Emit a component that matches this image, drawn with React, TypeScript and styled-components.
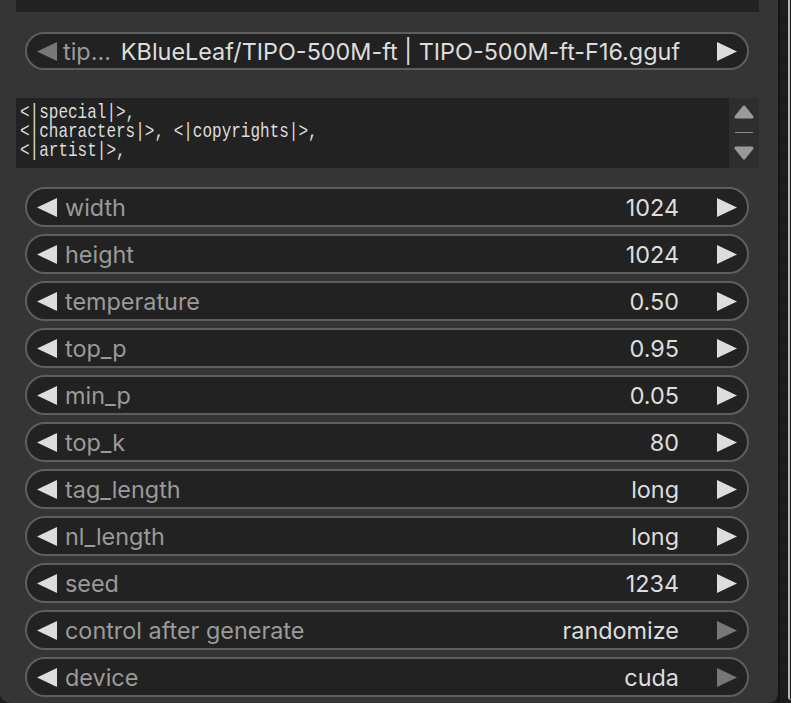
import styled, { createGlobalStyle } from "styled-components";

const GlobalStyle = createGlobalStyle`
  html, body {
    margin: 0;
    padding: 0;
    background: #1c1c1c;
  }
  body {
    font-family: Inter, "Noto Sans", sans-serif;
    overflow: hidden;
  }
`;

type SliderWidget = {
  name: string;
  value: string;
  atEnd?: boolean;
};

const widgets: SliderWidget[] = [
  { name: "width", value: "1024" },
  { name: "height", value: "1024" },
  { name: "temperature", value: "0.50" },
  { name: "top_p", value: "0.95" },
  { name: "min_p", value: "0.05" },
  { name: "top_k", value: "80" },
  { name: "tag_length", value: "long" },
  { name: "nl_length", value: "long" },
  { name: "seed", value: "1234" },
  { name: "control after generate", value: "randomize", atEnd: true },
  { name: "device", value: "cuda", atEnd: true },
];

const promptLines = [
  "<|special|>,",
  "<|characters|>, <|copyrights|>,",
  "<|artist|>,",
];

const Arrow = ({ dir, dim }: { dir: "left" | "right"; dim?: boolean }) => (
  <ArrowSvg viewBox="0 0 20 19" $dim={dim}>
    {dir === "left" ? (
      <polygon points="0,9.5 20,0 20,19" />
    ) : (
      <polygon points="20,9.5 0,0 0,19" />
    )}
  </ArrowSvg>
);

const App = () => (
  <>
    <GlobalStyle />
    <Canvas>
      <Node>
        <PrevWidgetTail />

        <ComboWidget>
          <Arrow dir="left" dim />
          <ComboLabel>tip…</ComboLabel>
          <ComboValue>KBlueLeaf/TIPO-500M-ft | TIPO-500M-ft-F16.gguf</ComboValue>
          <Arrow dir="right" />
        </ComboWidget>

        <PromptBox>
          <PromptText>{promptLines.join("\n")}</PromptText>
          <ScrollColumn>
            <svg width="20" height="14" viewBox="0 0 20 14">
              <polygon
                points="10,2 18,12 2,12"
                fill="#9a9a9a"
                stroke="#9a9a9a"
                strokeWidth="3"
                strokeLinejoin="round"
              />
            </svg>
            <ScrollRule />
            <svg width="20" height="14" viewBox="0 0 20 14">
              <polygon
                points="2,2 18,2 10,12"
                fill="#9a9a9a"
                stroke="#9a9a9a"
                strokeWidth="3"
                strokeLinejoin="round"
              />
            </svg>
          </ScrollColumn>
        </PromptBox>

        <WidgetList>
          {widgets.map((w) => (
            <NumberWidget key={w.name}>
              <Arrow dir="left" />
              <WidgetLabel>{w.name}</WidgetLabel>
              <WidgetValue>{w.value}</WidgetValue>
              <Arrow dir="right" dim={w.atEnd} />
            </NumberWidget>
          ))}
        </WidgetList>
      </Node>
      <Gutter />
      <NextNode />
    </Canvas>
  </>
);

export default App;

const Canvas = styled.div`
  display: flex;
  width: 791px;
  height: 703px;
  overflow: hidden;
`;

const Node = styled.div`
  flex: 0 0 778px;
  height: 703px;
  box-sizing: border-box;
  padding: 0 19px 0 16px;
  background: #353535;
  border-radius: 0 0 10px 10px;
  display: flex;
  flex-direction: column;
`;

const Gutter = styled.div`
  flex: 0 0 10px;
  background: repeating-linear-gradient(
    to bottom,
    #1d1d1d 0px,
    #1d1d1d 19px,
    #161616 19px,
    #161616 20px
  );
  border-left: 2px solid #151515;
  box-sizing: border-box;
`;

const NextNode = styled.div`
  flex: 1;
  border-left: 2px solid #b5b5b5;
  border-bottom-left-radius: 10px;
  background: #1a1a1a;
  height: 700px;
`;

const PrevWidgetTail = styled.div`
  height: 12px;
  background: #222222;
`;

const pill = `
  box-sizing: border-box;
  margin: 0 10px 0 9px;
  display: flex;
  align-items: center;
  background: #222222;
  border: 2px solid #5e5e5e;
  border-radius: 20px;
  padding: 0 10px;
  font-size: 23.4px;
  white-space: nowrap;
`;

const ComboWidget = styled.div`
  ${pill}
  margin-top: 20px;
  height: 38px;
`;

const ComboLabel = styled.span`
  color: #9a9a9a;
  margin-left: 6px;
`;

const ComboValue = styled.span`
  color: #dddddd;
  margin-left: 10px;
  flex: 1;
`;

const ArrowSvg = styled.svg<{ $dim?: boolean }>`
  flex: 0 0 20px;
  width: 20px;
  height: 19px;
  fill: ${(p) => (p.$dim ? "#777777" : "#dddddd")};
`;

const PromptBox = styled.div`
  margin-top: 28px;
  height: 70px;
  background: #222222;
  display: flex;
`;

const PromptText = styled.pre`
  flex: 1;
  margin: 0;
  padding: 4px 0 0 4px;
  font-family: "Liberation Mono", "DejaVu Sans Mono", monospace;
  font-size: 16px;
  line-height: 15px;
  color: #dddddd;
  transform: scaleY(1.3);
  transform-origin: top left;
`;

const ScrollColumn = styled.div`
  flex: 0 0 30px;
  background: #2e2e2e;
  display: flex;
  flex-direction: column;
  align-items: center;
  padding-top: 7px;
  gap: 13px;
`;

const ScrollRule = styled.div`
  width: 18px;
  height: 1px;
  flex: 0 0 1px;
  background: #8a8a8a;
`;

const WidgetList = styled.div`
  margin-top: 19px;
  display: flex;
  flex-direction: column;
  gap: 7px;
`;

const NumberWidget = styled.div`
  ${pill}
  height: 40px;
`;

const WidgetLabel = styled.span`
  color: #9a9a9a;
  margin-left: 8px;
  flex: 1;
`;

const WidgetValue = styled.span`
  color: #dddddd;
  margin-right: 38px;
`;
